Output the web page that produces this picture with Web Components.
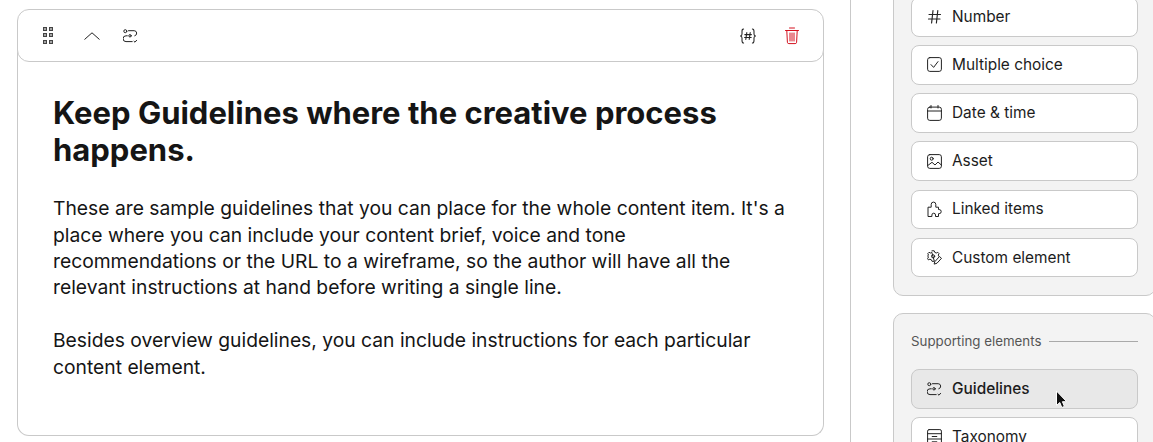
<!DOCTYPE html>
<html lang="en">
<head>
<meta charset="utf-8">
<title>Guidelines</title>
<style>
html,body{margin:0;padding:0;background:#fff;height:442px;overflow:hidden;}
body{font-family:Inter,"Liberation Sans",sans-serif;color:#151515;position:relative;}
</style>
</head>
<body>
<editor-layout>
  <guideline-card slot="main">
    <h-text>Keep Guidelines where the creative process happens.</h-text>
    <p-text>These are sample guidelines that you can place for the whole content item. It's a place where you can include your content brief, voice and tone recommendations or the URL to a wireframe, so the author will have all the relevant instructions at hand before writing a single line.</p-text>
    <p-text>Besides overview guidelines, you can include instructions for each particular content element.</p-text>
  </guideline-card>
  <side-panel slot="side" class="first">
    <element-button icon="hash">Number</element-button>
    <element-button icon="check">Multiple choice</element-button>
    <element-button icon="calendar">Date &amp; time</element-button>
    <element-button icon="asset">Asset</element-button>
    <element-button icon="puzzle">Linked items</element-button>
    <element-button icon="custom">Custom element</element-button>
  </side-panel>
  <side-panel slot="side" heading="Supporting elements">
    <element-button icon="guidelines" active>Guidelines</element-button>
    <element-button icon="taxonomy">Taxonomy</element-button>
  </side-panel>
</editor-layout>
<mouse-cursor></mouse-cursor>
<script>
const ICONS={
 grip:'<g fill="#a5a5a5" stroke="#444" stroke-width="1"><rect x="1.500" y="1.500" width="3" height="3"/><rect x="7.500" y="1.500" width="3" height="3"/><rect x="1.500" y="7.500" width="3" height="3"/><rect x="7.500" y="7.500" width="3" height="3"/><rect x="1.500" y="14.500" width="3" height="3"/><rect x="7.500" y="14.500" width="3" height="3"/></g>',
 chevron:'<path d="M.5 7.500 8 .8l7.500 6.700" fill="none" stroke="#222" stroke-width="1"/>',
 guidelines:'<g fill="none" stroke="#222" stroke-width="1" stroke-linecap="round" stroke-linejoin="round"><circle cx="2.300" cy="2.200" r="1.500"/><circle cx="7" cy="6.800" r="1.200"/><path d="M5.500 1.700h5.700a2.600 2.600 0 0 1 .6 5.100"/><path d="M4.300 6.800H3a2.900 2.900 0 0 0 0 5.800h6.200"/><path d="M11 12.300l1 .9 1.600-1.900"/></g>',
 braces:'<g fill="none" stroke="#222" stroke-width="1.050" stroke-linecap="round"><path d="M3.600 1C2 1 2 2 2 3.600V6c0 1-.4 1.600-1.400 2 1 .4 1.400 1 1.400 2v2.400c0 1.600 0 2.600 1.600 2.600"/><path d="M12.400 1c1.600 0 1.600 1 1.600 2.600V6c0 1 .4 1.600 1.400 2-1 .4-1.400 1-1.400 2v2.400c0 1.600 0 2.600-1.600 2.600"/><path d="M6.800 4.600 5.800 11.400M10.200 4.600 9.200 11.400M4.800 6.600h6.600M4.600 9.400h6.600"/></g>',
 trash:'<g fill="none" stroke="#d4111e" stroke-width="1" stroke-linecap="round" stroke-linejoin="round"><path d="M.5 3.500h13"/><path d="M4.500 1h5"/><path d="M1.800 3.500l.6 11.800c.1.900.6 1.300 1.400 1.300h6.400c.8 0 1.300-.4 1.400-1.300l.6-11.800"/><path d="M5 6v8M9 6v8M7 6v8"/></g>',
 hash:'<g fill="none" stroke="#222" stroke-width="1.150" stroke-linecap="round"><path d="M6 1.500 4.600 14M10.800 1.500 9.400 14M2 5.500h11.500M1.500 10H13"/></g>',
 check:'<g fill="none" stroke="#222" stroke-width="1" stroke-linejoin="round" stroke-linecap="round"><rect x=".6" y=".6" width="13.800" height="13.800" rx="2.200"/><path d="M4 7.600l2.600 2.800L11 4.600"/></g>',
 calendar:'<g fill="none" stroke="#222" stroke-width="1" stroke-linecap="round"><rect x=".6" y="2.100" width="13.800" height="13.300" rx="2.200"/><path d="M.6 6h13.800M4 .5v2.500M11 .5v2.500"/></g>',
 asset:'<g fill="none" stroke="#222" stroke-width="1" stroke-linejoin="round" stroke-linecap="round"><rect x=".6" y=".6" width="13.800" height="13.800" rx="2.200"/><circle cx="4.700" cy="4.700" r="1.500"/><path d="M.8 11.500 5 8.300l3 2.700 3-3 3.300 3"/></g>',
 puzzle:'<path fill="none" stroke="#222" stroke-width="1" stroke-linejoin="round" d="M1 15.500V6.200h3.200V3.400a2.300 2.300 0 0 1 4.600 0v2.800H11.500v2.300h.6a2.100 2.100 0 0 1 0 4.200h-.6v2.800H8.500v-1.500a1.800 1.800 0 0 0-3.600 0v1.500z"/>',
 custom:'<g fill="none" stroke="#222" stroke-width="1" stroke-linejoin="round" stroke-linecap="round"><path d="M5 .8h2.200l.6 1.600 1.500.6 1.500-.7 1.200 1.300-.7 1.500.4 1.100"/><path d="M7 11.300H5l-.6-1.500-1.500-.6-1.500.7L.6 8.600l.9-1.600L.6 6l.9-1 -.7-1.400L2 2.300 3.500 3l.9-.6z"/><circle cx="6.100" cy="6.300" r="1.600"/><path d="M8 11.500 12.500 6.500l2 1.800L10 13.200 7.500 14z"/></g>',
 taxonomy:'<g fill="none" stroke="#222" stroke-width="1" stroke-linecap="round"><rect x=".6" y=".6" width="13.800" height="14.800" rx="1.500"/><path d="M.6 4.700h13.800M.6 10h13.800M5.200 7.500h4.600M5.200 12.800h4.600"/></g>'
};
const SIZES={grip:[12,19],chevron:[16,8],guidelines:[15,14],braces:[16,16],trash:[14,18],hash:[15,16],check:[15,15],calendar:[15,16],asset:[15,15],puzzle:[15,16],custom:[15,15],taxonomy:[15,16]};
function def(name,css,html,extra){
  customElements.define(name,class extends HTMLElement{
    constructor(){super();this.attachShadow({mode:'open'}).innerHTML='<style>'+css+'</style>'+(typeof html==='function'?html(this):html);}
    connectedCallback(){if(extra)extra(this);}
  });
}
def('ui-icon',':host{display:inline-flex;align-items:center;justify-content:center;flex:none}svg{display:block}','',el=>{
  const n=el.getAttribute('name');const[w,h]=SIZES[n];
  el.shadowRoot.innerHTML+=`<svg width="${w}" height="${h}" viewBox="0 0 ${w} ${h}">${ICONS[n]}</svg>`;
});
def('editor-layout',`
  :host{display:flex;height:442px;overflow:hidden}
  .main{width:850px;box-sizing:border-box;padding:9px 26px 0 17px;flex:none}
  .side{flex:1;min-width:0;border-left:1px solid #c9c9c9;padding-left:42px;display:flex;flex-direction:column;gap:17px;overflow:hidden}
`,'<div class="main"><slot name="main"></slot></div><div class="side"><slot name="side"></slot></div>');
def('card-toolbar',`
  :host{display:flex;align-items:center;height:53px;box-sizing:border-box;border:1px solid #c9c9c9;border-radius:12px;background:#fff;padding:0 24px 0 24px;position:relative;z-index:1}
  .l{display:flex;align-items:center}
  .r{margin-left:auto;display:flex;align-items:center;gap:29px}
  .chev{margin-left:30px}.guide{margin-left:23px}
`,`<div class="l"><ui-icon name="grip"></ui-icon><ui-icon class="chev" name="chevron"></ui-icon><ui-icon class="guide" name="guidelines"></ui-icon></div>
<div class="r"><ui-icon name="braces"></ui-icon><ui-icon name="trash"></ui-icon></div>`);
def('guideline-card',`
  :host{display:block;width:807px}
  .body{margin-top:-12px;height:386px;box-sizing:border-box;border:1px solid #c9c9c9;border-top:0;border-radius:0 0 12px 12px;padding:45px 35px 0 35px}
`,'<card-toolbar></card-toolbar><div class="body"><slot></slot></div>');
def('h-text',':host{display:block;font:700 31px/36.500px Inter,"Liberation Sans",sans-serif;color:#151515;margin-bottom:27.100px}','<slot></slot>');
def('p-text',':host{display:block;font:400 19.270px/26.400px Inter,"Liberation Sans",sans-serif;color:#151515;margin-bottom:26.400px}','<slot></slot>');
def('side-panel',`
  :host{display:block;flex:none;box-sizing:border-box;width:263px;background:#f3f3f3;border:1px solid #c9c9c9;border-radius:10px;padding:17px 17px 18px 17px}
  :host(.first){margin-top:-13px;padding-top:9px;padding-bottom:17.850px}
  .head{display:none;align-items:center;gap:8px;font:400 13.300px/20px Inter,"Liberation Sans",sans-serif;color:#555;margin-bottom:18px}
  .head i{flex:1;height:1px;background:#a9a9a9}
  .list{display:flex;flex-direction:column;gap:8.550px}
`,el=>{const h=el.getAttribute('heading');return `<div class="head" style="${h?'display:flex':''}"><span>${h||''}</span><i></i></div><div class="list"><slot></slot></div>`;});
def('element-button',`
  :host{display:flex;align-items:center;height:39.600px;box-sizing:border-box;border:1px solid #c9c9c9;border-radius:8px;background:#fff;padding:0 0 0 15px;font:400 15.400px/20px Inter,"Liberation Sans",sans-serif;color:#1c1c1c;gap:10px}
  :host([active]){background:#e8e8e8;font-weight:500}
  ui-icon{width:15px}
`,el=>`<ui-icon name="${el.getAttribute('icon')}"></ui-icon><slot></slot>`);
def('mouse-cursor',':host{position:absolute;left:1055px;top:390px;display:block;width:13px;height:20px;z-index:5}svg{display:block}',
 '<svg width="13" height="20" viewBox="0 0 13 20"><path d="M1.500 1v14.500l3.300-3 2 5 2.600-1.100-2-4.700h4.300z" fill="#111" stroke="#fff" stroke-width="1"/></svg>');
</script>
</body>
</html>
